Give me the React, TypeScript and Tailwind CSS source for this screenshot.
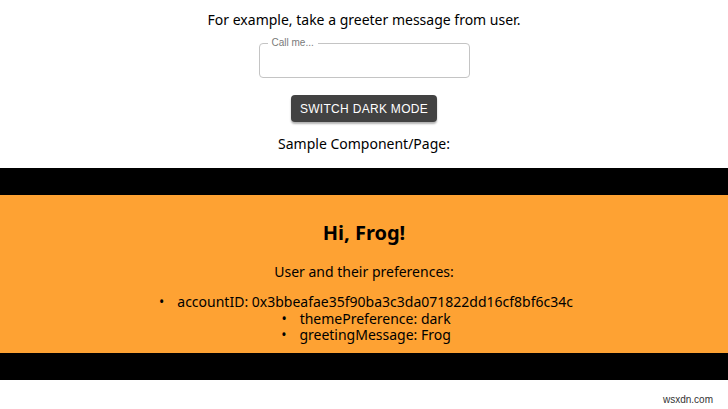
export default function App() {
  const prefs = [
    ["accountID", "0x3bbeafae35f90ba3c3da071822dd16cf8bf6c34c"],
    ["themePreference", "dark"],
    ["greetingMessage", "Frog"],
  ];

  return (
    <div className="min-h-[409px] bg-white text-black font-['Noto_Sans',sans-serif] text-[14px]">
      <div className="flex flex-col items-center pt-[10px]">
        <p className="leading-[20px]">For example, take a greeter message from user.</p>

        {/* outlined text field */}
        <fieldset className="mt-[8px] w-[211px] h-[40px] border border-[#c4c4c4] rounded-[4px] px-[8px]">
          <legend className="px-[4px] text-[10px] leading-[10px] text-[#7a7a7a] font-['Liberation_Sans',sans-serif]">
            Call me...
          </legend>
        </fieldset>

        <button className="mt-[17px] h-[27px] px-[9px] rounded-[4px] bg-[#424242] text-white text-[12px] tracking-[0.3px] font-['Liberation_Sans',sans-serif] shadow-[0_2px_2px_rgba(0,0,0,0.3)]">
          SWITCH DARK MODE
        </button>

        <p className="mt-[12px] leading-[20px]">Sample Component/Page:</p>
      </div>

      <div className="mt-[14px] border-y-[27px] border-black bg-[#fea233]">
        <div className="flex flex-col items-center pt-[25px] pb-[12px]">
          <h1 className="text-[20px] font-bold leading-[26px]">Hi, Frog!</h1>
          <p className="mt-[16px] leading-[20px]">User and their preferences:</p>
        </div>
        <ul className="text-center pl-[4px] pb-[9px]">
          {prefs.map(([k, v]) => (
            <li key={k} className="leading-[16.5px]">
              <span className="mr-[13px]">•</span>
              {k}: {v}
            </li>
          ))}
        </ul>
      </div>

      <div className="flex justify-end pr-[15px] pt-[12px]">
        <span className="text-[10px] text-[#333] font-['Liberation_Sans',sans-serif]">wsxdn.com</span>
      </div>
    </div>
  );
}
